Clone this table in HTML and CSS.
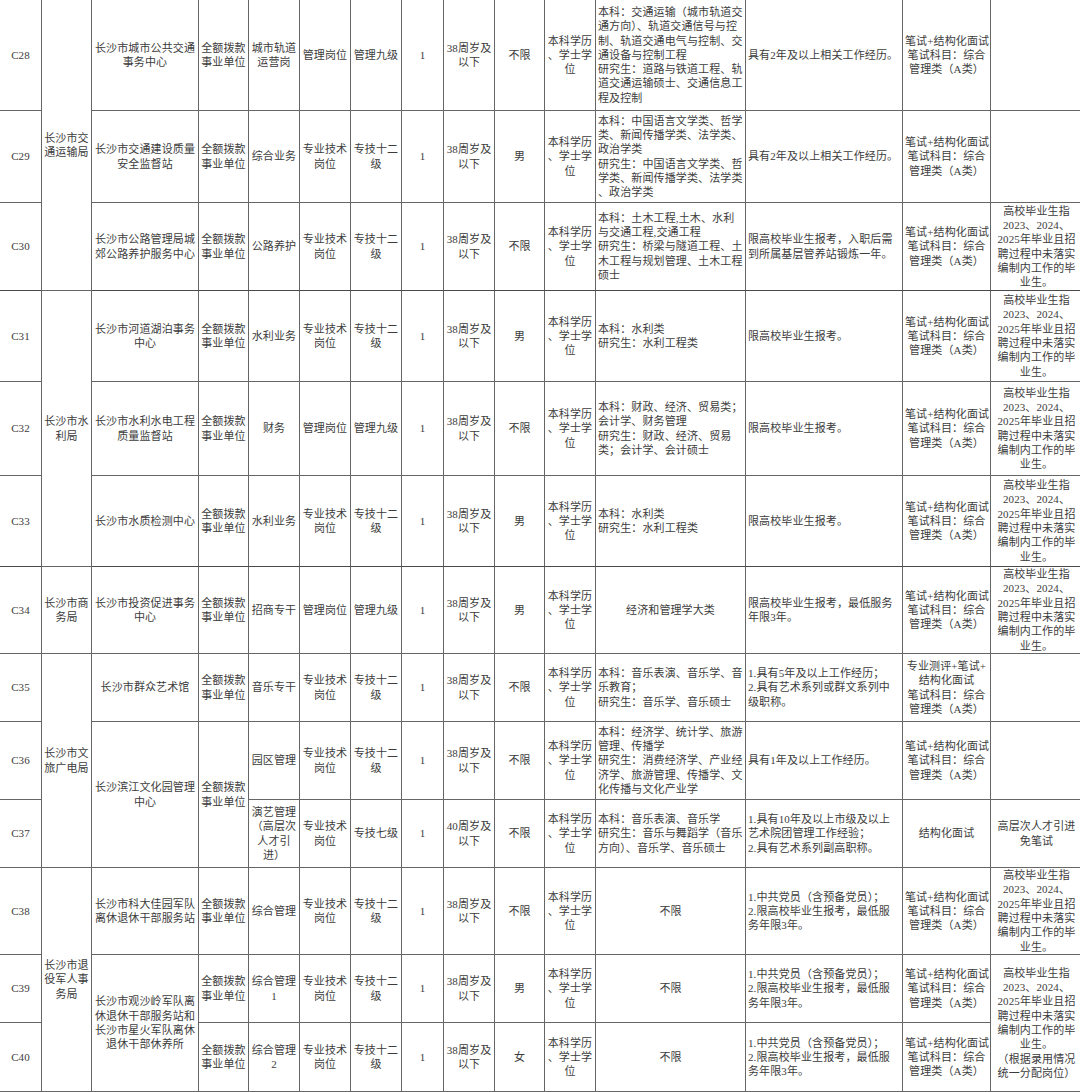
FILE: index.html
```html
<!DOCTYPE html>
<html lang="zh-CN">
<head>
<meta charset="utf-8">
<title>岗位表</title>
<link rel="stylesheet" href="styles.css">
</head>
<body>
<table class="jobs">
<colgroup>
<col class="c1"><col class="c2"><col class="c3"><col class="c4"><col class="c5"><col class="c6"><col class="c7"><col class="c8"><col class="c9"><col class="c10"><col class="c11"><col class="c12"><col class="c13"><col class="c14"><col class="c15">
</colgroup>
<tbody>
<tr class="r28">
<td>C28</td>
<td rowspan="3">长沙市交<br>通运输局</td>
<td>长沙市城市公共交通<br>事务中心</td>
<td>全额拨款<br>事业单位</td>
<td>城市轨道<br>运营岗</td>
<td>管理岗位</td>
<td>管理九级</td>
<td>1</td>
<td>38周岁及<br>以下</td>
<td>不限</td>
<td>本科学历<br>、学士学<br>位</td>
<td class="l">本科：交通运输（城市轨道交<br>通方向）、轨道交通信号与控<br>制、轨道交通电气与控制、交<br>通设备与控制工程<br>研究生：道路与铁道工程、轨<br>道交通运输硕士、交通信息工<br>程及控制</td>
<td class="l">具有2年及以上相关工作经历。</td>
<td>笔试+结构化面试<br>笔试科目：综合<br>管理类（A类）</td>
<td></td>
</tr>
<tr class="r29">
<td>C29</td>
<td>长沙市交通建设质量<br>安全监督站</td>
<td>全额拨款<br>事业单位</td>
<td>综合业务</td>
<td>专业技术<br>岗位</td>
<td>专技十二<br>级</td>
<td>1</td>
<td>38周岁及<br>以下</td>
<td>男</td>
<td>本科学历<br>、学士学<br>位</td>
<td class="l">本科：中国语言文学类、哲学<br>类、新闻传播学类、法学类、<br>政治学类<br>研究生：中国语言文学类、哲<br>学类、新闻传播学类、法学类<br>、政治学类</td>
<td class="l">具有2年及以上相关工作经历。</td>
<td>笔试+结构化面试<br>笔试科目：综合<br>管理类（A类）</td>
<td></td>
</tr>
<tr class="r30 sep">
<td>C30</td>
<td>长沙市公路管理局城<br>郊公路养护服务中心</td>
<td>全额拨款<br>事业单位</td>
<td>公路养护</td>
<td>专业技术<br>岗位</td>
<td>专技十二<br>级</td>
<td>1</td>
<td>38周岁及<br>以下</td>
<td>不限</td>
<td>本科学历<br>、学士学<br>位</td>
<td class="l">本科：土木工程,土木、水利<br>与交通工程,交通工程<br>研究生：桥梁与隧道工程、土<br>木工程与规划管理、土木工程<br>硕士</td>
<td class="l">限高校毕业生报考，入职后需<br>到所属基层管养站锻炼一年。</td>
<td>笔试+结构化面试<br>笔试科目：综合<br>管理类（A类）</td>
<td>高校毕业生指<br>2023、2024、<br>2025年毕业且招<br>聘过程中未落实<br>编制内工作的毕<br>业生。</td>
</tr>
<tr class="r31">
<td>C31</td>
<td rowspan="3">长沙市水<br>利局</td>
<td>长沙市河道湖泊事务<br>中心</td>
<td>全额拨款<br>事业单位</td>
<td>水利业务</td>
<td>专业技术<br>岗位</td>
<td>专技十二<br>级</td>
<td>1</td>
<td>38周岁及<br>以下</td>
<td>男</td>
<td>本科学历<br>、学士学<br>位</td>
<td class="l">本科：水利类<br>研究生：水利工程类</td>
<td class="l">限高校毕业生报考。</td>
<td>笔试+结构化面试<br>笔试科目：综合<br>管理类（A类）</td>
<td>高校毕业生指<br>2023、2024、<br>2025年毕业且招<br>聘过程中未落实<br>编制内工作的毕<br>业生。</td>
</tr>
<tr class="r32">
<td>C32</td>
<td>长沙市水利水电工程<br>质量监督站</td>
<td>全额拨款<br>事业单位</td>
<td>财务</td>
<td>管理岗位</td>
<td>管理九级</td>
<td>1</td>
<td>38周岁及<br>以下</td>
<td>不限</td>
<td>本科学历<br>、学士学<br>位</td>
<td class="l">本科：财政、经济、贸易类；<br>会计学、财务管理<br>研究生：财政、经济、贸易<br>类；会计学、会计硕士</td>
<td class="l">限高校毕业生报考。</td>
<td>笔试+结构化面试<br>笔试科目：综合<br>管理类（A类）</td>
<td>高校毕业生指<br>2023、2024、<br>2025年毕业且招<br>聘过程中未落实<br>编制内工作的毕<br>业生。</td>
</tr>
<tr class="r33 sep">
<td>C33</td>
<td>长沙市水质检测中心</td>
<td>全额拨款<br>事业单位</td>
<td>水利业务</td>
<td>专业技术<br>岗位</td>
<td>专技十二<br>级</td>
<td>1</td>
<td>38周岁及<br>以下</td>
<td>男</td>
<td>本科学历<br>、学士学<br>位</td>
<td class="l">本科：水利类<br>研究生：水利工程类</td>
<td class="l">限高校毕业生报考。</td>
<td>笔试+结构化面试<br>笔试科目：综合<br>管理类（A类）</td>
<td>高校毕业生指<br>2023、2024、<br>2025年毕业且招<br>聘过程中未落实<br>编制内工作的毕<br>业生。</td>
</tr>
<tr class="r34">
<td>C34</td>
<td>长沙市商<br>务局</td>
<td>长沙市投资促进事务<br>中心</td>
<td>全额拨款<br>事业单位</td>
<td>招商专干</td>
<td>管理岗位</td>
<td>管理九级</td>
<td>1</td>
<td>38周岁及<br>以下</td>
<td>男</td>
<td>本科学历<br>、学士学<br>位</td>
<td>经济和管理学大类</td>
<td class="l">限高校毕业生报考，最低服务<br>年限3年。</td>
<td>笔试+结构化面试<br>笔试科目：综合<br>管理类（A类）</td>
<td>高校毕业生指<br>2023、2024、<br>2025年毕业且招<br>聘过程中未落实<br>编制内工作的毕<br>业生。</td>
</tr>
<tr class="r35">
<td>C35</td>
<td rowspan="3">长沙市文<br>旅广电局</td>
<td>长沙市群众艺术馆</td>
<td>全额拨款<br>事业单位</td>
<td>音乐专干</td>
<td>专业技术<br>岗位</td>
<td>专技十二<br>级</td>
<td>1</td>
<td>38周岁及<br>以下</td>
<td>不限</td>
<td>本科学历<br>、学士学<br>位</td>
<td class="l">本科：音乐表演、音乐学、音<br>乐教育；<br>研究生：音乐学、音乐硕士</td>
<td class="l">1.具有5年及以上工作经历；<br>2.具有艺术系列或群文系列中<br>级职称。</td>
<td>专业测评+笔试+<br>结构化面试<br>笔试科目：综合<br>管理类（A类）</td>
<td></td>
</tr>
<tr class="r36">
<td>C36</td>
<td rowspan="2">长沙滨江文化园管理<br>中心</td>
<td rowspan="2">全额拨款<br>事业单位</td>
<td>园区管理</td>
<td>专业技术<br>岗位</td>
<td>专技十二<br>级</td>
<td>1</td>
<td>38周岁及<br>以下</td>
<td>不限</td>
<td>本科学历<br>、学士学<br>位</td>
<td class="l">本科：经济学、统计学、旅游<br>管理、传播学<br>研究生：消费经济学、产业经<br>济学、旅游管理、传播学、文<br>化传播与文化产业学</td>
<td class="l">具有1年及以上工作经历。</td>
<td>笔试+结构化面试<br>笔试科目：综合<br>管理类（A类）</td>
<td></td>
</tr>
<tr class="r37">
<td>C37</td>
<td>演艺管理<br>（高层次<br>人才引<br>进）</td>
<td>专业技术<br>岗位</td>
<td>专技七级</td>
<td>1</td>
<td>40周岁及<br>以下</td>
<td>不限</td>
<td>本科学历<br>、学士学<br>位</td>
<td class="l">本科：音乐表演、音乐学<br>研究生：音乐与舞蹈学（音乐<br>方向）、音乐学、音乐硕士</td>
<td class="l">1.具有10年及以上市级及以上<br>艺术院团管理工作经验；<br>2.具有艺术系列副高职称。</td>
<td>结构化面试</td>
<td>高层次人才引进<br>免笔试</td>
</tr>
<tr class="r38">
<td>C38</td>
<td rowspan="3">长沙市退<br>役军人事<br>务局</td>
<td>长沙市科大佳园军队<br>离休退休干部服务站</td>
<td>全额拨款<br>事业单位</td>
<td>综合管理</td>
<td>专业技术<br>岗位</td>
<td>专技十二<br>级</td>
<td>1</td>
<td>38周岁及<br>以下</td>
<td>不限</td>
<td>本科学历<br>、学士学<br>位</td>
<td>不限</td>
<td class="l">1.中共党员（含预备党员）；<br>2.限高校毕业生报考，最低服<br>务年限3年。</td>
<td>笔试+结构化面试<br>笔试科目：综合<br>管理类（A类）</td>
<td>高校毕业生指<br>2023、2024、<br>2025年毕业且招<br>聘过程中未落实<br>编制内工作的毕<br>业生。</td>
</tr>
<tr class="r39">
<td>C39</td>
<td rowspan="2">长沙市观沙岭军队离<br>休退休干部服务站和<br>长沙市星火军队离休<br>退休干部休养所</td>
<td>全额拨款<br>事业单位</td>
<td>综合管理<br>1</td>
<td>专业技术<br>岗位</td>
<td>专技十二<br>级</td>
<td>1</td>
<td>38周岁及<br>以下</td>
<td>男</td>
<td>本科学历<br>、学士学<br>位</td>
<td>不限</td>
<td class="l">1.中共党员（含预备党员）；<br>2.限高校毕业生报考，最低服<br>务年限3年。</td>
<td>笔试+结构化面试<br>笔试科目：综合<br>管理类（A类）</td>
<td rowspan="2">高校毕业生指<br>2023、2024、<br>2025年毕业且招<br>聘过程中未落实<br>编制内工作的毕<br>业生。<br>（根据录用情况<br>统一分配岗位）</td>
</tr>
<tr class="r40">
<td>C40</td>
<td>全额拨款<br>事业单位</td>
<td>综合管理<br>2</td>
<td>专业技术<br>岗位</td>
<td>专技十二<br>级</td>
<td>1</td>
<td>38周岁及<br>以下</td>
<td>女</td>
<td>本科学历<br>、学士学<br>位</td>
<td>不限</td>
<td class="l">1.中共党员（含预备党员）；<br>2.限高校毕业生报考，最低服<br>务年限3年。</td>
<td>笔试+结构化面试<br>笔试科目：综合<br>管理类（A类）</td>
</tr>
</tbody>
</table>
</body>
</html>
```
FILE: styles.css
```css
html, body {
  margin: 0;
  padding: 0;
  background: #ffffff;
  overflow: hidden;
}

.jobs {
  border-collapse: collapse;
  table-layout: fixed;
  width: 1083px;
  margin: -1px 0 0 -1px;
  font-family: "Liberation Serif", "Noto Sans CJK SC", serif;
  font-size: 11px;
  letter-spacing: 0.12px;
  line-height: 14.3px;
  color: #3c3c3c;
}

.jobs td {
  border: 1px solid #666666;
  padding: 0 2px;
  text-align: center;
  vertical-align: middle;
  white-space: nowrap;
  overflow: visible;
}

.jobs td.l {
  text-align: left;
}

.jobs tr.sep td {
  border-bottom-color: #4a4a4a;
}

.c1 { width: 42px; }
.c2 { width: 50px; }
.c3 { width: 107px; }
.c4 { width: 50px; }
.c5 { width: 51px; }
.c6 { width: 51px; }
.c7 { width: 51px; }
.c8 { width: 42px; }
.c9 { width: 51px; }
.c10 { width: 50px; }
.c11 { width: 51px; }
.c12 { width: 150px; }
.c13 { width: 157px; }
.c14 { width: 88px; }
.c15 { width: 92px; }

.r28 { height: 111px; }
.r29 { height: 92px; }
.r30 { height: 88px; }
.r31 { height: 91px; }
.r32 { height: 94px; }
.r33 { height: 91px; }
.r34 { height: 87px; }
.r35 { height: 68px; }
.r36 { height: 78px; }
.r37 { height: 68px; }
.r38 { height: 87px; }
.r39 { height: 68px; }
.r40 { height: 69px; }
```
